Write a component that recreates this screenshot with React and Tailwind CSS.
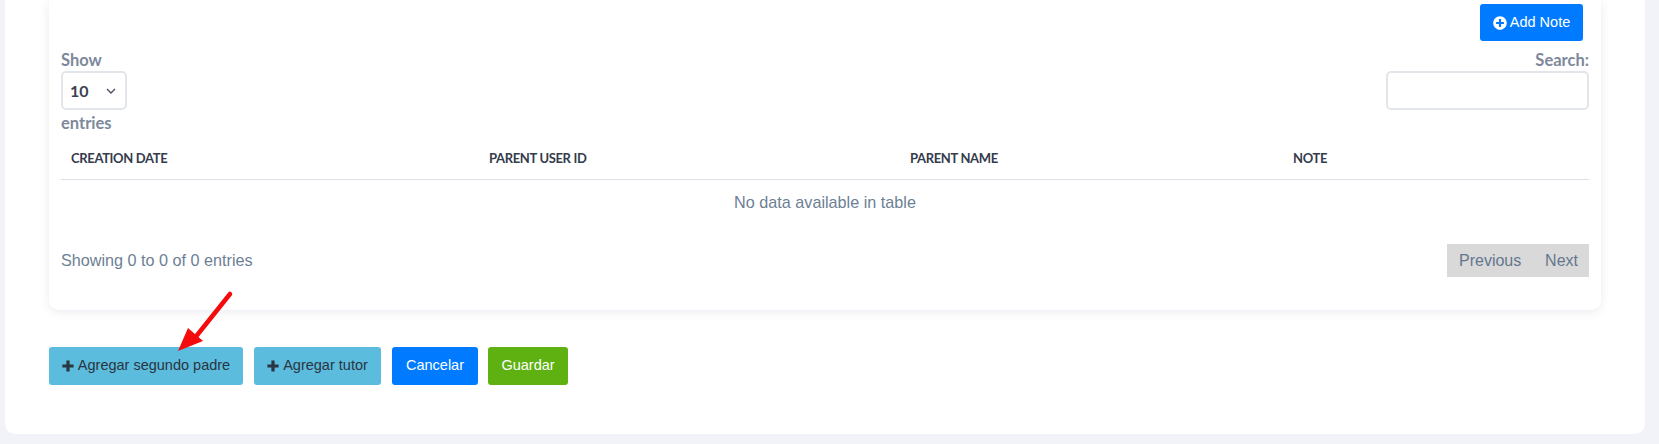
import React from "react";
import { FaPlusCircle } from "react-icons/fa";

const COLUMNS = [
  { label: "CREATION DATE", width: "w-[418px]" },
  { label: "PARENT USER ID", width: "w-[421px]" },
  { label: "PARENT NAME", width: "w-[383px]" },
  { label: "NOTE", width: "" },
];

function PlusIcon() {
  return (
    <svg width="12" height="12" viewBox="0 0 12 12" fill="currentColor">
      <path d="M4.4 0.4h3.2v4h4v3.2h-4v4H4.4v-4h-4V4.400h4z" />
    </svg>
  );
}

function ActionButton({ className, children }) {
  return (
    <button className={`flex h-[38px] items-center justify-center rounded-[3px] text-[14.5px] ${className}`}>
      {children}
    </button>
  );
}

function NotesTable() {
  return (
    <table className="w-full border-collapse">
      <thead>
        <tr className="border-b border-[#dcdfe5]">
          {COLUMNS.map((col) => (
            <th
              key={col.label}
              className={`h-[44px] px-[10px] pt-[4px] text-left font-['Lato',sans-serif] text-[13px] font-bold tracking-[-0.35px] text-[#343b4c] ${col.width}`}
            >
              {col.label}
            </th>
          ))}
        </tr>
      </thead>
      <tbody>
        <tr>
          <td colSpan={4} className="h-[46px] text-center text-[16.2px] text-[#6d7f95]">
            No data available in table
          </td>
        </tr>
      </tbody>
    </table>
  );
}

export default function App() {
  return (
    <div className="relative h-[444px] overflow-hidden bg-[#f1f3f9] pl-[5px] pr-[14px] font-['Liberation_Sans',sans-serif]">
      <div className="h-[434px] rounded-b-[10px] bg-white pl-[44px] pr-[44px]">
        <div className="h-[310px] rounded-b-[10px] bg-white px-[12px] pt-[4px] shadow-[0_2px_10px_rgba(90,100,140,0.12)]">
          <div className="flex justify-end pr-[6px]">
            <button className="flex h-[37px] w-[103px] items-center justify-center gap-[3px] rounded-[3px] bg-[#007bff] text-[14.5px] text-white">
              <FaPlusCircle className="text-[14px]" />
              Add Note
            </button>
          </div>

          <div className="flex justify-between font-['Lato',sans-serif] text-[16.500px] font-bold text-[#7d899b]">
            <div>
              <div className="mt-[9px] h-[21px] leading-[21px]">Show</div>
              <div className="flex h-[39px] w-[66px] items-center justify-between rounded-[5px] border-2 border-[#e2e5ea] pl-[7px] pr-[9px] text-[16px] text-[#3b4251]">
                <span>10</span>
                <svg width="10" height="6" viewBox="0 0 10 6" fill="none" stroke="#4a5161" strokeWidth="1.4">
                  <path d="M1 1l4 4 4-4" />
                </svg>
              </div>
              <div className="mt-[3px] h-[22px] leading-[21px]">entries</div>
            </div>
            <div className="text-right">
              <div className="mt-[9px] h-[21px] leading-[21px]">Search:</div>
              <div className="h-[39px] w-[203px] rounded-[5px] border-2 border-[#e2e5ea]" />
            </div>
          </div>

          <NotesTable />

          <div className="mt-[19px] flex items-center justify-between">
            <span className="text-[16.2px] text-[#6d7f95]">Showing 0 to 0 of 0 entries</span>
            <div className="flex h-[33px] w-[142px] items-center justify-between bg-[#d9d9d9] pl-[12px] pr-[11px] text-[16px] text-[#64768e]">
              <span>Previous</span>
              <span>Next</span>
            </div>
          </div>
        </div>

        <div className="mt-[37px] flex">
          <ActionButton className="w-[194px] gap-[4px] bg-[#5bbcdd] text-[#2a3442]">
            <PlusIcon />
            Agregar segundo padre
          </ActionButton>
          <ActionButton className="ml-[11px] w-[127px] gap-[4px] bg-[#5bbcdd] text-[#2a3442]">
            <PlusIcon />
            Agregar tutor
          </ActionButton>
          <ActionButton className="ml-[11px] w-[86px] bg-[#007bff] text-white">Cancelar</ActionButton>
          <ActionButton className="ml-[10px] w-[80px] bg-[#5eb111] text-white">Guardar</ActionButton>
        </div>
      </div>

      {/* red annotation arrow */}
      <svg className="absolute left-[170px] top-[285px]" width="70" height="72" viewBox="0 0 70 72" fill="none">
        <path d="M60 9L24 54" stroke="#f40c0c" strokeWidth="4.5" strokeLinecap="round" />
        <path d="M8 66L18 43L33 56Z" fill="#f40c0c" />
      </svg>
    </div>
  );
}
